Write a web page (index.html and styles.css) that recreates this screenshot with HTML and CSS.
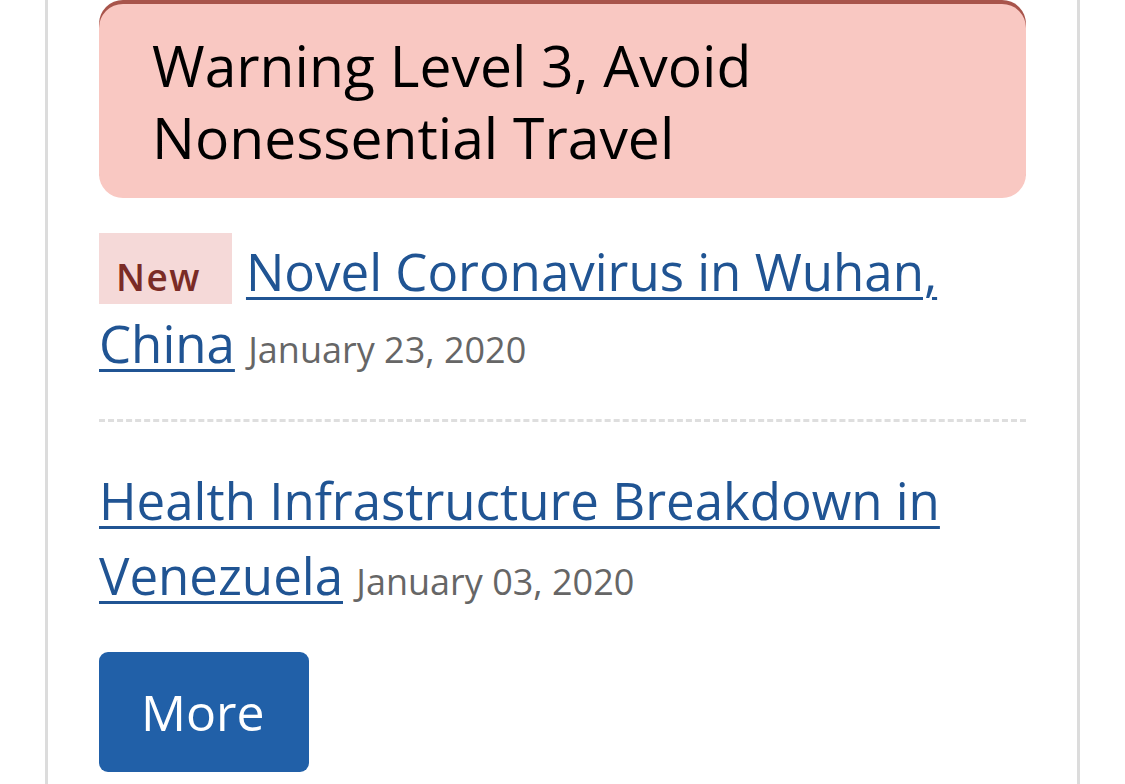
FILE: index.html
```html
<!DOCTYPE html>
<html lang="en">
<head>
<meta charset="utf-8">
<title>Travel Notices</title>
<link rel="stylesheet" href="styles.css">
</head>
<body>
<div class="page">
  <div class="warning">Warning Level 3, Avoid Nonessential Travel</div>
  <ul class="notices">
    <li class="notice notice-first"><span class="badge">New</span><a class="notice-link" href="#">Novel Coronavirus in Wuhan, China</a> <span class="date">January 23, 2020</span></li>
    <li class="notice notice-next"><a class="notice-link" href="#">Health Infrastructure Breakdown in Venezuela</a> <span class="date">January 03, 2020</span></li>
  </ul>
  <a class="more" href="#">More</a>
</div>
</body>
</html>
```
FILE: styles.css
```css
html, body {
  margin: 0;
  padding: 0;
  background: #ffffff;
}
body {
  font-family: "Open Sans", "Noto Sans", sans-serif;
  height: 784px;
  overflow: hidden;
}
.page {
  box-sizing: border-box;
  margin-left: 45px;
  width: 1035px;
  min-height: 784px;
  border-left: 3px solid #dcdcdc;
  border-right: 3px solid #dcdcdc;
  padding: 4px 51px 0 51px;
}
.warning {
  background: #f9c8c2;
  box-shadow: 0 -4px 0 #a8544b;
  border-radius: 24px;
  padding: 25px 53px 25px 53px;
  font-size: 57px;
  line-height: 72px;
  color: #000000;
}
.notices {
  list-style: none;
  margin: 0;
  padding: 0;
}
.notice {
  font-size: 51px;
}
.notice-first {
  line-height: 72px;
  padding: 35px 0 33px 0;
}
.notice-next {
  line-height: 75px;
  border-top: 3px dashed #dedede;
  padding: 41px 0 33px 0;
}
.badge {
  display: inline-block;
  background: #f5d9d8;
  color: #7a2b26;
  font-size: 37px;
  font-weight: 600;
  letter-spacing: 1.5px;
  line-height: 36px;
  padding: 26px 31px 9px 17px;
  margin-right: 14px;
}
.notice-link {
  color: #205493;
  text-decoration: underline;
  text-decoration-thickness: 3px;
  text-underline-offset: 6px;
}
.date {
  font-size: 36px;
  color: #666666;
}
.more {
  display: inline-block;
  background: #2160a8;
  color: #ffffff;
  text-decoration: none;
  font-size: 50px;
  line-height: 68px;
  padding: 26px 44px 26px 42px;
  border-radius: 9px;
}
```
